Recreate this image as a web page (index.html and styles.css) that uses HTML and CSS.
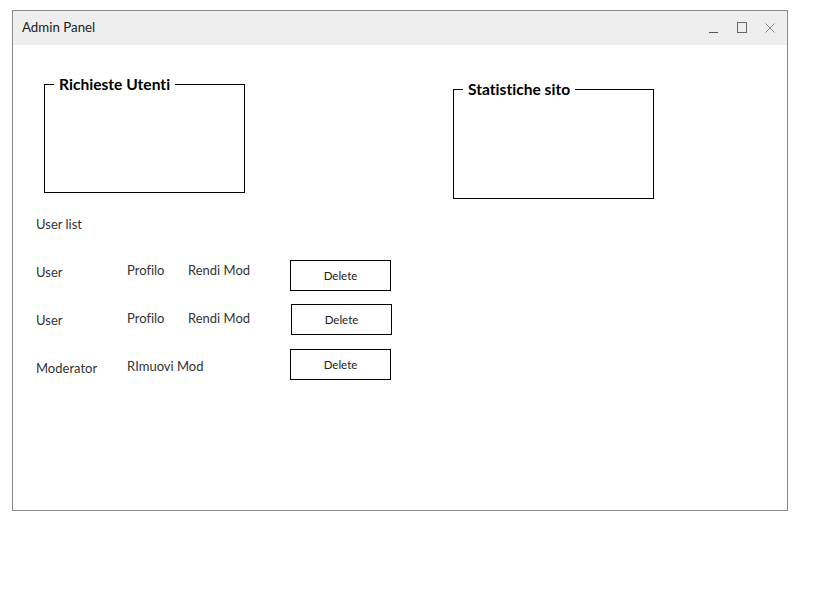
FILE: index.html
```html
<!DOCTYPE html>
<html lang="it">
<head>
<meta charset="utf-8">
<title>Admin Panel</title>
<link rel="stylesheet" href="styles.css">
</head>
<body>
<div class="window">
  <div class="titlebar">
    <span class="title">Admin Panel</span>
    <div class="controls">
      <svg class="ic ic-min" width="9" height="11" viewBox="0 0 9 11"><line x1="0" y1="10.5" x2="9" y2="10.5" stroke="#555" stroke-width="1"/></svg>
      <svg class="ic ic-max" width="10" height="11" viewBox="0 0 10 11"><rect x="0.5" y="0.5" width="9" height="10" fill="none" stroke="#666" stroke-width="1"/></svg>
      <svg class="ic ic-close" width="10" height="10" viewBox="0 0 10 10"><path d="M0.5 0.5 L9.5 9.5 M9.5 0.5 L0.5 9.5" stroke="#888" stroke-width="1" fill="none"/></svg>
    </div>
  </div>
  <div class="content">
    <div class="top-row">
      <fieldset class="box box-requests">
        <legend>Richieste Utenti</legend>
        <div class="box-body"></div>
      </fieldset>
      <fieldset class="box box-stats">
        <legend>Statistiche sito</legend>
        <div class="box-body"></div>
      </fieldset>
    </div>
    <div class="list-title">User list</div>
    <div class="user-row row-1">
      <span class="label">User</span>
      <span class="link">Profilo</span>
      <span class="link">Rendi Mod</span>
      <button class="btn">Delete</button>
    </div>
    <div class="user-row row-2">
      <span class="label">User</span>
      <span class="link">Profilo</span>
      <span class="link">Rendi Mod</span>
      <button class="btn">Delete</button>
    </div>
    <div class="user-row row-3">
      <span class="label">Moderator</span>
      <span class="link span-2">RImuovi Mod</span>
      <button class="btn">Delete</button>
    </div>
  </div>
</div>
</body>
</html>
```

FILE: styles.css
```css
html, body {
  margin: 0;
  padding: 0;
  background: #fff;
}

body {
  font-family: Lato, "Open Sans", "Liberation Sans", sans-serif;
  font-variant-ligatures: none;
  color: #333;
}

.window {
  margin: 10px 0 0 12px;
  width: 774px;
  height: 499px;
  border: 1px solid #888;
  display: flex;
  flex-direction: column;
}

.titlebar {
  height: 34px;
  background: #eeeeee;
  display: flex;
  align-items: flex-start;
  justify-content: space-between;
  padding: 0 12px 0 9px;
}

.title {
  font-size: 13.3px;
  line-height: 16px;
  margin-top: 8px;
  color: #222;
}

.controls {
  display: flex;
  align-items: flex-start;
  padding-top: 11px;
}

.ic { display: block; }
.ic-max { margin-left: 19px; }
.ic-close { margin-left: 18px; margin-top: 1px; }

.content {
  padding: 0 0 0 23px;
  display: flex;
  flex-direction: column;
}

.top-row {
  display: flex;
  align-items: flex-start;
}

.box {
  margin: 0;
  padding: 0;
  width: 199px;
  border: 1px solid #000;
  min-inline-size: 0;
}

.box legend {
  font-weight: 700;
  font-size: 15.6px;
  line-height: 17px;
  color: #000;
  padding: 0 5px;
  margin-left: 9px;
}

.box-body {
  height: 99px;
}

.box-requests {
  margin: 31px 0 0 8px;
}

.box-stats {
  margin: 36px 0 0 208px;
}

.box-stats .box-body {
  height: 100px;
}

.list-title {
  font-size: 13px;
  line-height: 16px;
  margin-top: 17px;
}

.user-row {
  display: grid;
  grid-template-columns: 91px 61px 102px 101px;
  align-items: start;
  font-size: 13px;
  line-height: 16px;
}

.row-1 { margin-top: 28px; }
.row-2 { margin-top: 13px; }
.row-3 { margin-top: 14px; }

.span-2 { grid-column: 2 / span 2; }

.row-1 .label { margin-top: 4px; }
.row-1 .link { margin-top: 2px; }
.row-2 .label { margin-top: 8px; }
.row-2 .link { margin-top: 6px; }
.row-2 .btn { margin-left: 1px; }
.row-3 .label { margin-top: 11px; }
.row-3 .link { margin-top: 9px; }

.btn {
  width: 101px;
  height: 31px;
  margin: 0;
  padding: 0;
  border: 1px solid #000;
  background: #fff;
  font-family: Lato, "Open Sans", "Liberation Sans", sans-serif;
  font-size: 11.5px;
  color: #222;
  cursor: pointer;
}
```
